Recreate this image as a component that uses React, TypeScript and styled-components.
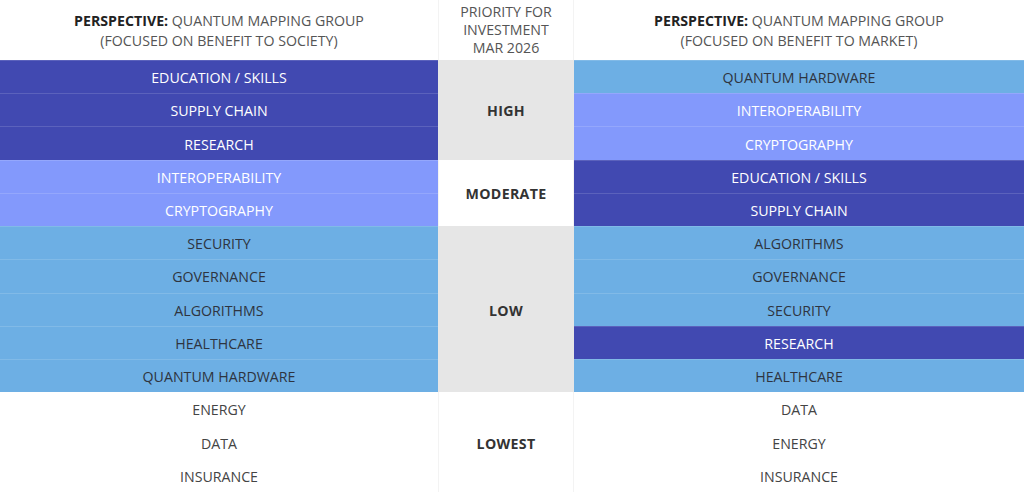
import React from "react";
import styled, { createGlobalStyle } from "styled-components";

type Tone = "dark" | "mid" | "light" | "none";

interface Row {
  label: string;
  tone: Tone;
}

interface Band {
  label: string;
  span: number;
  shaded: boolean;
}

const society: Row[] = [
  { label: "EDUCATION / SKILLS", tone: "dark" },
  { label: "SUPPLY CHAIN", tone: "dark" },
  { label: "RESEARCH", tone: "dark" },
  { label: "INTEROPERABILITY", tone: "mid" },
  { label: "CRYPTOGRAPHY", tone: "mid" },
  { label: "SECURITY", tone: "light" },
  { label: "GOVERNANCE", tone: "light" },
  { label: "ALGORITHMS", tone: "light" },
  { label: "HEALTHCARE", tone: "light" },
  { label: "QUANTUM HARDWARE", tone: "light" },
  { label: "ENERGY", tone: "none" },
  { label: "DATA", tone: "none" },
  { label: "INSURANCE", tone: "none" },
];

const market: Row[] = [
  { label: "QUANTUM HARDWARE", tone: "light" },
  { label: "INTEROPERABILITY", tone: "mid" },
  { label: "CRYPTOGRAPHY", tone: "mid" },
  { label: "EDUCATION / SKILLS", tone: "dark" },
  { label: "SUPPLY CHAIN", tone: "dark" },
  { label: "ALGORITHMS", tone: "light" },
  { label: "GOVERNANCE", tone: "light" },
  { label: "SECURITY", tone: "light" },
  { label: "RESEARCH", tone: "dark" },
  { label: "HEALTHCARE", tone: "light" },
  { label: "DATA", tone: "none" },
  { label: "ENERGY", tone: "none" },
  { label: "INSURANCE", tone: "none" },
];

const bands: Band[] = [
  { label: "HIGH", span: 3, shaded: true },
  { label: "MODERATE", span: 2, shaded: false },
  { label: "LOW", span: 5, shaded: true },
  { label: "LOWEST", span: 3, shaded: false },
];

const toneBg: Record<Tone, string> = {
  dark: "#4149b1",
  mid: "#8399fc",
  light: "#6dafe4",
  none: "#ffffff",
};

const toneText: Record<Tone, string> = {
  dark: "#ffffff",
  mid: "#ffffff",
  light: "#2e3440",
  none: "#444444",
};

function App() {
  let start = 2;
  return (
    <>
      <GlobalStyle />
      <Table>
        <SideHeader $col={1}>
          <div>
            <strong>PERSPECTIVE:</strong> QUANTUM MAPPING GROUP
          </div>
          <div>(FOCUSED ON BENEFIT TO SOCIETY)</div>
        </SideHeader>
        <MiddleHeader>
          <div>PRIORITY FOR</div>
          <div>INVESTMENT</div>
          <div>MAR 2026</div>
        </MiddleHeader>
        <SideHeader $col={3}>
          <div>
            <strong>PERSPECTIVE:</strong> QUANTUM MAPPING GROUP
          </div>
          <div>(FOCUSED ON BENEFIT TO MARKET)</div>
        </SideHeader>

        {society.map((r, i) => (
          <Cell key={"s" + i} $col={1} $row={i + 2} $tone={r.tone}>
            {r.label}
          </Cell>
        ))}

        {bands.map((b) => {
          const el = (
            <BandCell
              key={b.label}
              $start={start}
              $span={b.span}
              $shaded={b.shaded}
            >
              {b.label}
            </BandCell>
          );
          start += b.span;
          return el;
        })}

        {market.map((r, i) => (
          <Cell key={"m" + i} $col={3} $row={i + 2} $tone={r.tone}>
            {r.label}
          </Cell>
        ))}
      </Table>
    </>
  );
}

export default App;

// styled-components

const GlobalStyle = createGlobalStyle`
  html, body {
    margin: 0;
    padding: 0;
    background: #ffffff;
  }
  body {
    font-family: "Open Sans", "Liberation Sans", sans-serif;
  }
`;

const Table = styled.div`
  display: grid;
  grid-template-columns: 438px 136px 1fr;
  grid-template-rows: 60px repeat(13, 1fr);
  width: 1024px;
  height: 492px;
  font-size: 14.2px;
`;

const SideHeader = styled.div<{ $col: number }>`
  grid-column: ${(p) => p.$col};
  grid-row: 1;
  display: flex;
  flex-direction: column;
  justify-content: center;
  align-items: center;
  line-height: 20px;
  color: #555555;
  padding-top: 1px;

  strong {
    color: #222222;
    font-weight: 700;
  }
`;

const MiddleHeader = styled.div`
  grid-column: 2;
  grid-row: 1;
  display: flex;
  flex-direction: column;
  justify-content: center;
  align-items: center;
  line-height: 18px;
  color: #555555;
  border-left: 1px solid #f3f3f3;
  border-right: 1px solid #f3f3f3;
`;

const Cell = styled.div<{ $col: number; $row: number; $tone: Tone }>`
  grid-column: ${(p) => p.$col};
  grid-row: ${(p) => p.$row};
  display: flex;
  align-items: center;
  justify-content: center;
  padding-top: 2px;
  background: ${(p) => toneBg[p.$tone]};
  color: ${(p) => toneText[p.$tone]};
  box-shadow: ${(p) =>
    p.$tone === "none" ? "none" : "inset 0 1px 0 rgba(255, 255, 255, 0.14)"};
`;

const BandCell = styled.div<{ $start: number; $span: number; $shaded: boolean }>`
  grid-column: 2;
  grid-row: ${(p) => p.$start} / span ${(p) => p.$span};
  display: flex;
  align-items: center;
  justify-content: center;
  padding-top: 2px;
  background: ${(p) => (p.$shaded ? "#e6e6e6" : "#ffffff")};
  border-left: 1px solid ${(p) => (p.$shaded ? "#e6e6e6" : "#f3f3f3")};
  border-right: 1px solid ${(p) => (p.$shaded ? "#e6e6e6" : "#f3f3f3")};
  color: #333333;
  font-weight: 700;
  letter-spacing: 0.3px;
`;
